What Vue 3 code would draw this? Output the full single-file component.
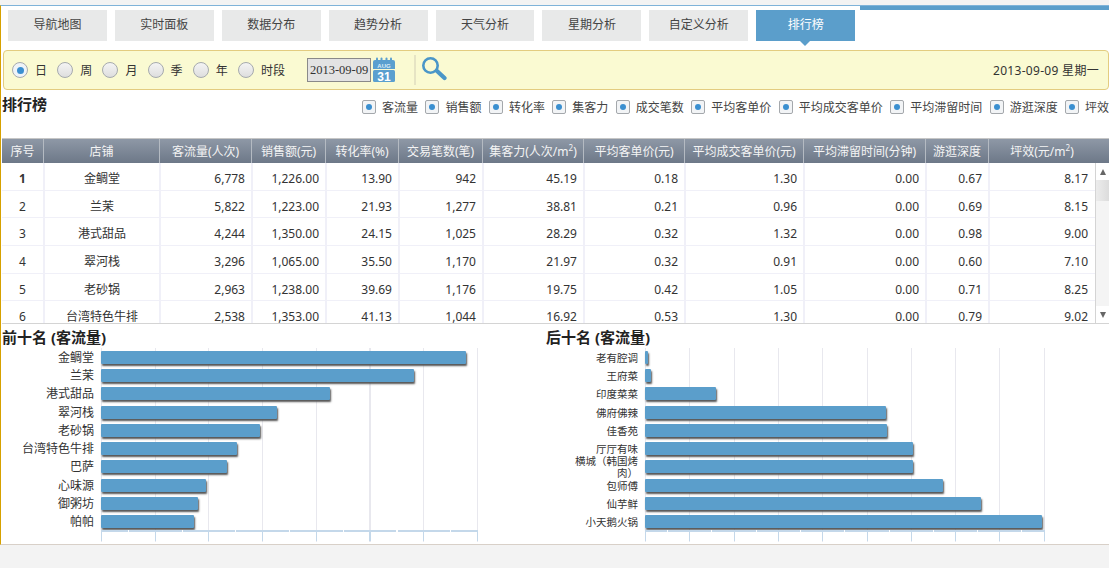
<template>
  <div class="page">
    <div class="top-strip"></div>
    <div class="main">
      <!-- 导航 -->
      <div class="tabs">
        <div
          v-for="tab in tabs"
          :key="tab"
          class="tab"
          :class="{ active: tab === '排行榜' }"
        >
          {{ tab }}
        </div>
      </div>

      <!-- 查询条件 -->
      <div class="filter-bar">
        <div class="radio-item" v-for="(item, i) in periods" :key="item">
          <span class="radio" :class="{ on: i === 0 }"></span>
          <span class="radio-label">{{ item }}</span>
        </div>
        <div class="date-input">2013-09-09</div>
        <svg class="cal" width="22" height="25" viewBox="0 0 22 25">
          <path d="M0 12 V5 Q0 3 2 3 H20 Q22 3 22 5 V12 Z" fill="#5a9fcf" />
          <rect x="0" y="13" width="22" height="12" rx="1.5" fill="#5a9fcf" />
          <rect x="3" y="0.5" width="2" height="4" rx="1" fill="#5a9fcf" />
          <rect x="7.5" y="0.5" width="2" height="4" rx="1" fill="#5a9fcf" />
          <rect x="12.5" y="0.5" width="2" height="4" rx="1" fill="#5a9fcf" />
          <rect x="17" y="0.5" width="2" height="4" rx="1" fill="#5a9fcf" />
          <text x="11" y="10.5" text-anchor="middle" class="cal-month">AUG</text>
          <text x="11" y="23.5" text-anchor="middle" class="cal-day">31</text>
        </svg>
        <div class="divider"></div>
        <svg class="search" width="25" height="24" viewBox="0 0 25 24">
          <circle cx="8.5" cy="8.5" r="7.2" fill="none" stroke="#4a96c8" stroke-width="2.6" />
          <path d="M15 14 L22.5 21" stroke="#4a96c8" stroke-width="4.2" stroke-linecap="round" />
        </svg>
        <div class="today">2013-09-09 星期一</div>
      </div>

      <!-- 标题和指标 -->
      <div class="title-row">
        <div class="title">排行榜</div>
        <div class="checks">
          <div class="check-item" v-for="item in metrics" :key="item">
            <span class="check"></span>
            <span>{{ item }}</span>
          </div>
        </div>
      </div>

      <!-- 表格 -->
      <div class="table">
        <div class="table-head row-grid">
          <div v-for="col in columns" :key="col" class="th">
            <template v-if="col === '集客力(人次/㎡)'">集客力(人次/m<sup>2</sup>)</template>
            <template v-else-if="col === '坪效(元/㎡)'">坪效(元/m<sup>2</sup>)</template>
            <template v-else>{{ col }}</template>
          </div>
        </div>
        <div class="table-body">
          <div class="rows">
            <div v-for="(row, r) in rows" :key="row[0]" class="row-grid tr">
              <div
                v-for="(cell, c) in row"
                :key="c"
                class="td"
                :class="{ center: c < 2, bold: c === 0 && r === 0 }"
              >
                {{ cell }}
              </div>
            </div>
          </div>
          <div class="scrollbar">
            <div class="btn"><span class="arrow up"></span></div>
            <div class="thumb"></div>
            <div class="btn end"><span class="arrow down"></span></div>
          </div>
        </div>
      </div>

      <!-- 图表 -->
      <div class="charts">
        <div class="chart chart-top">
          <div class="chart-title">前十名 (客流量)</div>
          <div class="plot">
            <div v-for="item in topList" :key="item.name" class="bar-row">
              <div class="bar-label">{{ item.name }}</div>
              <div class="bar" :style="{ width: item.w + 'px' }"></div>
            </div>
            <div class="axis"></div>
          </div>
        </div>
        <div class="chart chart-bottom">
          <div class="chart-title">后十名 (客流量)</div>
          <div class="plot">
            <div v-for="item in bottomList" :key="item.name" class="bar-row">
              <div class="bar-label small">{{ item.name }}</div>
              <div class="bar" :style="{ width: item.w + 'px' }"></div>
            </div>
            <div class="axis"></div>
          </div>
        </div>
      </div>
    </div>
  </div>
</template>

<script setup>
const tabs = ['导航地图', '实时面板', '数据分布', '趋势分析', '天气分析', '星期分析', '自定义分析', '排行榜']
const periods = ['日', '周', '月', '季', '年', '时段']
const metrics = ['客流量', '销售额', '转化率', '集客力', '成交笔数', '平均客单价', '平均成交客单价', '平均滞留时间', '游逛深度', '坪效']
const columns = ['序号', '店铺', '客流量(人次)', '销售额(元)', '转化率(%)', '交易笔数(笔)', '集客力(人次/㎡)', '平均客单价(元)', '平均成交客单价(元)', '平均滞留时间(分钟)', '游逛深度', '坪效(元/㎡)']

const rows = [
  ['1', '金鲷堂', '6,778', '1,226.00', '13.90', '942', '45.19', '0.18', '1.30', '0.00', '0.67', '8.17'],
  ['2', '兰茉', '5,822', '1,223.00', '21.93', '1,277', '38.81', '0.21', '0.96', '0.00', '0.69', '8.15'],
  ['3', '港式甜品', '4,244', '1,350.00', '24.15', '1,025', '28.29', '0.32', '1.32', '0.00', '0.98', '9.00'],
  ['4', '翠河栈', '3,296', '1,065.00', '35.50', '1,170', '21.97', '0.32', '0.91', '0.00', '0.60', '7.10'],
  ['5', '老砂锅', '2,963', '1,238.00', '39.69', '1,176', '19.75', '0.42', '1.05', '0.00', '0.71', '8.25'],
  ['6', '台湾特色牛排', '2,538', '1,353.00', '41.13', '1,044', '16.92', '0.53', '1.30', '0.00', '0.79', '9.02']
]

const topList = [
  { name: '金鲷堂', w: 365 },
  { name: '兰茉', w: 313 },
  { name: '港式甜品', w: 229 },
  { name: '翠河栈', w: 176 },
  { name: '老砂锅', w: 159 },
  { name: '台湾特色牛排', w: 136 },
  { name: '巴萨', w: 126 },
  { name: '心味源', w: 105 },
  { name: '御粥坊', w: 97 },
  { name: '帕帕', w: 93 }
]

const bottomList = [
  { name: '老有腔调', w: 3 },
  { name: '王府菜', w: 6 },
  { name: '印度菜菜', w: 71 },
  { name: '佛府佛辣', w: 241 },
  { name: '佳香苑', w: 242 },
  { name: '厅厅有味', w: 268 },
  { name: '横城（韩国烤肉）', w: 268 },
  { name: '包师傅', w: 298 },
  { name: '仙芋鲜', w: 336 },
  { name: '小天鹅火锅', w: 397 }
]
</script>

<style scoped>
.page {
  font-family: "Noto Sans", "Noto Sans CJK SC", sans-serif;
  font-size: 12px;
  color: #333;
  width: 1109px;
}
.top-strip {
  height: 5px;
  background: #f3f3f3;
}
.main {
  height: 540px;
  box-sizing: border-box;
  background: #fff;
  border-left: 1px solid #d6a100;
  border-top: 1px solid #7fb3d9;
  border-bottom: 1px solid #d8d0c8;
  padding-left: 1px;
  overflow: hidden;
  position: relative;
}
.main::before {
  content: "";
  position: absolute;
  left: 859px;
  right: 0;
  top: -1px;
  height: 5px;
  background: #5b9ecb;
}
.tabs {
  display: flex;
  gap: 8px;
  padding: 4px 0 0 6px;
}
.tab {
  width: 98.9px;
  height: 31px;
  line-height: 30px;
  text-align: center;
  background: #e8e9e9;
  color: #444;
  position: relative;
}
.tab.active {
  background: #5b9ecb;
  color: #fff;
}
.tab.active::after {
  content: "";
  position: absolute;
  left: 44px;
  top: 31px;
  border-left: 5px solid transparent;
  border-right: 5px solid transparent;
  border-top: 5px solid #5b9ecb;
}
.filter-bar {
  display: flex;
  align-items: center;
  height: 40px;
  box-sizing: border-box;
  margin: 9px 0 0 1px;
  padding-left: 8px;
  background: #fafad2;
  border: 1px solid #e3cc80;
  border-radius: 4px;
  color: #333;
}
.radio-item {
  display: flex;
  align-items: center;
  width: 45.2px;
}
.radio {
  width: 14px;
  height: 14px;
  border: 1px solid #a6aaae;
  border-radius: 50%;
  background: linear-gradient(#f4f4f4, #dedede);
  position: relative;
  flex: none;
}
.radio.on {
  background: #eef3f8;
}
.radio.on::after {
  content: "";
  position: absolute;
  left: 3.5px;
  top: 3.5px;
  width: 7px;
  height: 7px;
  border-radius: 50%;
  background: #3a8fd0;
}
.radio-label {
  margin-left: 7px;
  white-space: nowrap;
}
.date-input {
  width: 64px;
  height: 24px;
  line-height: 23px;
  box-sizing: border-box;
  margin-left: 24px;
  border: 1px solid #8a8a8a;
  background: #e3e3e3;
  font-family: "Liberation Serif", serif;
  font-size: 12.5px;
  text-align: center;
  color: #333;
}
.cal {
  margin-left: 2px;
  margin-bottom: 2px;
  flex: none;
}
.cal-month {
  font-family: "Liberation Sans", sans-serif;
  font-size: 6px;
  font-weight: bold;
  fill: #dcecf7;
}
.cal-day {
  font-family: "Liberation Sans", sans-serif;
  font-size: 12px;
  font-weight: bold;
  fill: #fff;
}
.divider {
  width: 2px;
  height: 30px;
  margin-left: 19px;
  background: #e6e4c4;
}
.search {
  margin-left: 6px;
  margin-bottom: 2px;
  flex: none;
}
.today {
  margin-left: auto;
  padding-right: 9px;
  letter-spacing: 0.3px;
  color: #333;
}
.title-row {
  display: flex;
  height: 48px;
}
.title {
  font-size: 15px;
  font-weight: bold;
  line-height: 28px;
  color: #222;
  width: 360px;
  flex: none;
}
.checks {
  display: flex;
  gap: 7.45px;
  padding-top: 9px;
  white-space: nowrap;
  flex: none;
}
.check-item {
  display: flex;
  align-items: center;
  gap: 6px;
  height: 16px;
  color: #444;
}
.check {
  width: 12px;
  height: 12px;
  border: 1px solid #a4a8ac;
  border-radius: 2px;
  background: #f2f4f6;
  position: relative;
  flex: none;
}
.check::after {
  content: "";
  position: absolute;
  left: 3px;
  top: 3px;
  width: 6px;
  height: 6px;
  border-radius: 50%;
  background: #3a8fd0;
}
.row-grid {
  display: grid;
  grid-template-columns: 41px 116px 92px 74px 73px 84px 101px 101px 119px 122px 63px 107px;
}
.table {
  height: 185px;
  border-bottom: 1px solid #d4d4d4;
  overflow: hidden;
}
.table-head {
  height: 25px;
  box-sizing: border-box;
  border-top: 1px solid #c6c6c6;
  background: linear-gradient(#8e98a6, #6d7888);
}
.th {
  color: #f4f4f4;
  text-align: center;
  line-height: 25px;
  border-left: 1px solid #b4bac2;
  white-space: nowrap;
  overflow: hidden;
}
.th:first-child {
  border-left: none;
}
.th sup {
  font-size: 8px;
  line-height: 0;
}
.table-body {
  display: flex;
  height: 160px;
}
.rows {
  width: 1093px;
  flex: none;
}
.tr {
  height: 27.7px;
  box-sizing: border-box;
  border-bottom: 1px solid #f0f0f8;
}
.td {
  line-height: 31.5px;
  text-align: right;
  padding-right: 6px;
  border-left: 2px solid #f0f0f8;
  white-space: nowrap;
  color: #333;
}
.td:first-child {
  border-left: none;
}
.td:last-child {
  padding-right: 7px;
}
.td.center {
  text-align: center;
  padding-right: 0;
}
.td.bold {
  font-weight: bold;
}
.scrollbar {
  flex: 1;
  display: flex;
  flex-direction: column;
  background: #f4f4f4;
  border-left: 1px solid #d4d4d4;
}
.btn {
  height: 17px;
  flex: none;
  background: #fff;
  display: flex;
  justify-content: center;
  align-items: center;
}
.btn.end {
  margin-top: auto;
}
.arrow {
  width: 0;
  height: 0;
  border-left: 3px solid transparent;
  border-right: 3px solid transparent;
}
.arrow.up {
  border-bottom: 6px solid #666;
}
.arrow.down {
  border-top: 6px solid #666;
}
.thumb {
  height: 21px;
  flex: none;
  background: linear-gradient(to right, #ececec, #dcdcdc);
}
.charts {
  display: flex;
}
.chart {
  flex: none;
}
.chart-top {
  width: 544px;
}
.chart-title {
  font-size: 15px;
  font-weight: bold;
  line-height: 21px;
  padding-top: 3px;
  color: #222;
}
.plot {
  position: relative;
  height: 194px;
  padding-top: 1px;
  box-sizing: border-box;
}
.chart-top .plot {
  margin-left: 99px;
  width: 377px;
  --step: 53.7px;
  background: repeating-linear-gradient(to right, #e8e8ee 0, #e8e8ee 1px, transparent 1px, transparent var(--step));
}
.chart-bottom .plot {
  margin-left: 99px;
  width: 400px;
  --step: 44.3px;
  background: repeating-linear-gradient(to right, #e8e8ee 0, #e8e8ee 1px, transparent 1px, transparent var(--step));
}
.bar-row {
  height: 18.3px;
  position: relative;
  display: flex;
  align-items: center;
}
.bar {
  height: 13px;
  margin-bottom: 2px;
  background: #5b9ecb;
  border-radius: 1px;
  box-shadow: 1px 2px 2px #555;
}
.bar-label {
  position: absolute;
  right: 100%;
  margin-right: 7px;
  margin-bottom: 1px;
  width: 90px;
  text-align: right;
  color: #333;
  line-height: 12px;
}
.bar-label.small {
  font-size: 10.5px;
  width: 70px;
}
.axis {
  position: absolute;
  left: 0;
  right: 0;
  top: 182px;
  height: 9px;
  border-top: 2px solid #c4d8ea;
  background: #fff repeating-linear-gradient(to right, #c4d8ea 0, #c4d8ea 1px, transparent 1px, transparent var(--step));
  border-right: 1px solid #c4d8ea;
}
.axis::before {
  content: "";
  position: absolute;
  left: calc(var(--step) / 2);
  right: 0;
  top: -2px;
  height: 4px;
  background: repeating-linear-gradient(to right, #fff 0, #fff 1px, transparent 1px, transparent var(--step));
}
</style>

<style>
body {
  background: #f3f3f3;
}
</style>
